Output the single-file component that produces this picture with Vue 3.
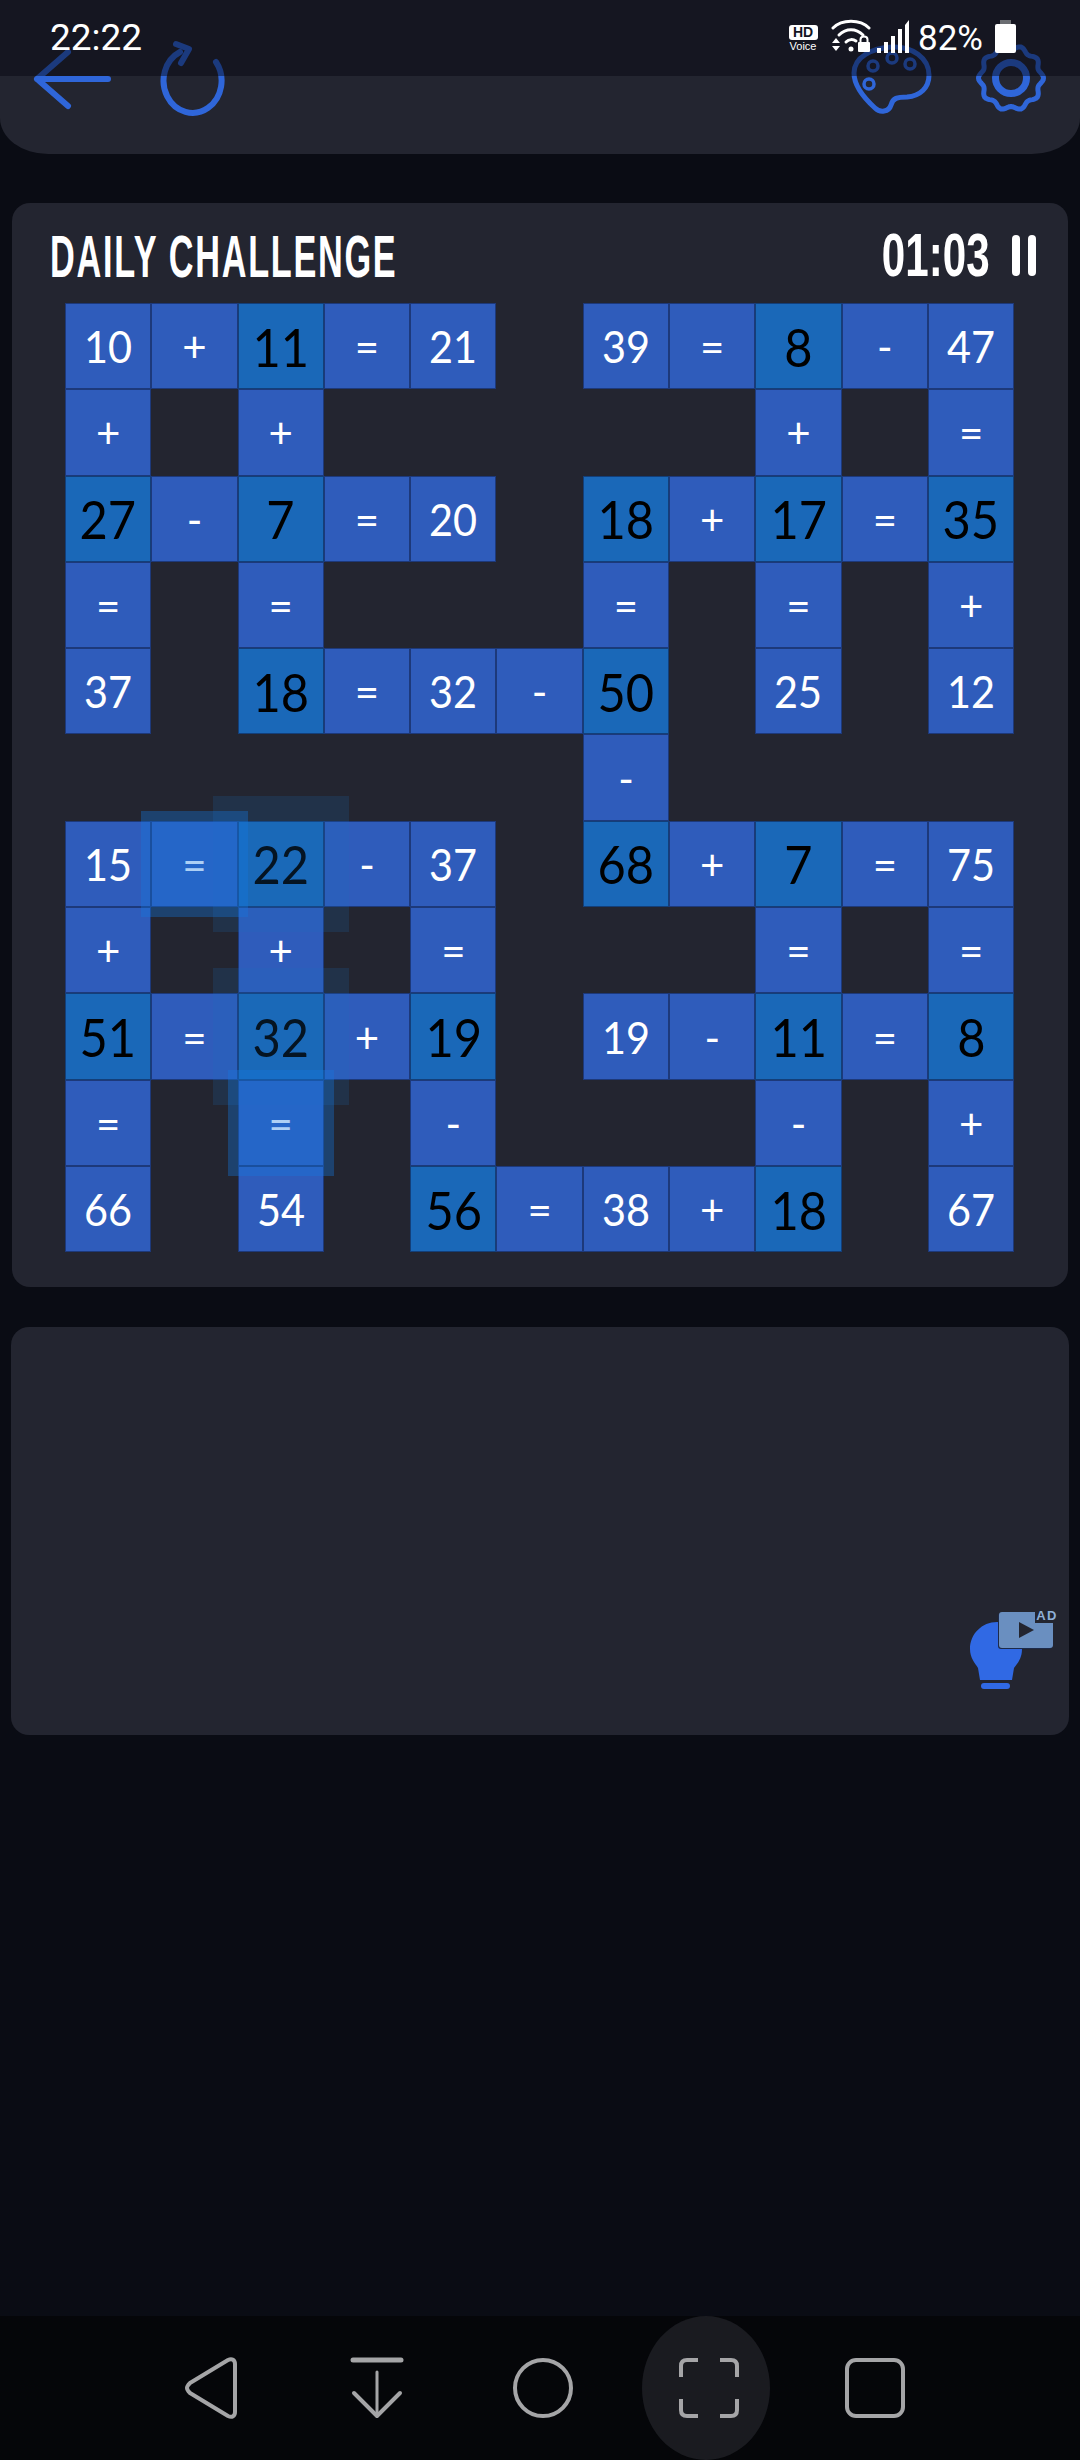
<script setup>
const rows = [
  '10 + 11* = 21 _ 39 = 8* - 47',
  '+ _ + _ _ _ _ _ + _ =',
  '27* - 7* = 20 _ 18* + 17* = 35*',
  '= _ = _ _ _ = _ = _ +',
  '37 _ 18* = 32 - 50* _ 25 _ 12',
  '_ _ _ _ _ _ - _ _ _ _',
  '15 =! 22*~ - 37 _ 68* + 7* = 75',
  '+ _ + _ = _ _ _ = _ =',
  '51* = 32*~ + 19* _ 19 - 11* = 8*',
  '= _ =! _ - _ _ _ - _ +',
  '66 _ 54 _ 56* = 38 + 18* _ 67',
]

// every token: text plus optional markers (* solved, ! selected, ~ halo)
const cells = rows.flatMap((row) => row.split(' ')).map((tok) => ({
  text: tok === '_' ? '' : tok.replace(/[*!~]/g, ''),
  empty: tok === '_',
  number: /\d/.test(tok),
  solved: tok.includes('*'),
  selected: tok.includes('!'),
  halo: tok.includes('~'),
}))

// wavy outline of the settings gear
const gearPoints = []
for (let i = 0; i < 120; i++) {
  const a = (i / 120) * Math.PI * 2
  const r = 30.5 + 2 * Math.cos(a * 10)
  gearPoints.push((37 + r * Math.cos(a)).toFixed(1) + ',' + (38 + r * Math.sin(a)).toFixed(1))
}
const gearOutline = gearPoints.join(' ')
</script>

<template>
  <div class="page">
    <header class="topbar">
      <div class="status">
        <span class="clock">22:22</span>
        <div class="status-right">
          <div class="hd">
            <span class="hd-box">HD</span>
            <span class="hd-voice">Voice</span>
          </div>
          <svg class="wifi" width="42" height="34" viewBox="0 0 42 34">
            <path d="M2 9C11 0 29 0 38 9" fill="none" stroke="#fff" stroke-width="3" stroke-linecap="round" />
            <path d="M8 16C15 9 25 9 32 16" fill="none" stroke="#fff" stroke-width="3" stroke-linecap="round" />
            <path d="M15 23C18 20 22 20 25 22" fill="none" stroke="#fff" stroke-width="3" stroke-linecap="round" />
            <circle cx="20" cy="30" r="2.5" fill="#fff" />
            <path d="M1 24L5 19L9 24ZM1 27L9 27L5 32Z" fill="#fff" />
            <rect x="27" y="23" width="12" height="10" rx="1" fill="#fff" />
            <path d="M29.5 23V20.5C29.5 16.5 36.5 16.5 36.5 20.5V23" fill="none" stroke="#fff" stroke-width="2" />
          </svg>
          <svg class="signal" width="34" height="33" viewBox="0 0 34 33">
            <rect x="0" y="28" width="4" height="5" fill="#fff" />
            <rect x="7" y="22" width="4" height="11" fill="#fff" />
            <rect x="14" y="16" width="4" height="17" fill="#fff" />
            <rect x="21" y="9" width="4" height="24" fill="#fff" />
            <path d="M28 5L32 0V33H28Z" fill="#fff" />
          </svg>
          <span class="percent">82%</span>
          <div class="battery"><i></i><b></b></div>
        </div>
      </div>

      <div class="tools">
        <div class="tool-group">
          <svg width="84" height="76" viewBox="0 0 84 76" fill="none" stroke="#2f66d9" stroke-width="6" stroke-linecap="round" stroke-linejoin="round">
            <path d="M7 39H78M7 39L38 12M7 39L38 66" />
          </svg>
          <svg class="refresh" width="72" height="76" viewBox="0 0 72 76" fill="none" stroke="#2f66d9" stroke-width="6" stroke-linecap="round" stroke-linejoin="round">
            <path d="M61 22A29 32 0 1 1 25 12" />
            <path d="M21 4L34 9L26 23" />
          </svg>
        </div>
        <div class="tool-group right">
          <svg width="84" height="76" viewBox="0 0 84 76" fill="none" stroke="#2f66d9" stroke-width="5" stroke-linejoin="round">
            <path d="M42 7C62 6 79 18 79 35C79 48 70 56 57 57C47 57 43 58 41 65C39 72 30 73 25 68C14 58 4 45 4 33C4 17 22 8 42 7Z" />
            <circle cx="23" cy="26" r="5" stroke-width="3.5" />
            <circle cx="42" cy="18" r="5" stroke-width="3.5" />
            <circle cx="60" cy="24" r="5" stroke-width="3.5" />
            <circle cx="19" cy="44" r="5" stroke-width="3.5" />
          </svg>
          <svg width="76" height="76" viewBox="0 0 76 76" fill="none" stroke="#2f66d9" stroke-width="5">
            <polygon :points="gearOutline" stroke-linejoin="round" />
            <circle cx="37" cy="38" r="15.5" stroke-width="7" />
          </svg>
        </div>
      </div>
    </header>

    <section class="card board-card">
      <div class="board-head">
        <h1 class="title"><span>DAILY CHALLENGE</span></h1>
        <div class="timer">
          <span class="time">01:03</span>
          <div class="pause"><i></i><i></i></div>
        </div>
      </div>
      <div class="board">
        <div
          v-for="(cell, i) in cells"
          :key="i"
          class="cell"
          :class="{ empty: cell.empty, solved: cell.solved }"
        >
          <span :class="{ num: cell.number }">{{ cell.text }}</span>
          <div v-if="cell.halo" class="halo"></div>
          <div v-if="cell.selected" class="glow"></div>
        </div>
      </div>
    </section>

    <section class="card hint-card">
      <div class="hint">
        <svg class="bulb" width="54" height="68" viewBox="0 0 54 68">
          <path d="M27 0C12 0 0 12 0 27C0 36 5 41 8 46L10 58H42L44 46C48 41 52 36 52 27C52 12 41 0 27 0Z" fill="#3069e4" />
          <rect x="11" y="61" width="29" height="6" rx="3" fill="#3069e4" />
        </svg>
        <div class="ad-tile">
          <svg width="18" height="18" viewBox="0 0 18 18"><path d="M2 1L17 9L2 17Z" fill="#232530" /></svg>
          <span class="ad-label">AD</span>
        </div>
      </div>
    </section>

    <div class="spacer"></div>

    <nav class="navbar">
      <div class="nav-btn">
        <svg width="54" height="62" viewBox="0 0 54 62" fill="none" stroke="#a5a5a7" stroke-width="4" stroke-linejoin="round">
          <path d="M3 31C3 29 4 28 6 26L44 3C48 1 51 3 51 7V55C51 59 48 61 44 59L6 36C4 34 3 33 3 31Z" />
        </svg>
      </div>
      <div class="nav-btn">
        <svg width="54" height="62" viewBox="0 0 54 62" fill="none" stroke="#a5a5a7" stroke-linecap="round" stroke-linejoin="round">
          <path d="M3 3H51" stroke-width="5" />
          <path d="M27 15V59" stroke-width="3" />
          <path d="M4 36L27 59L50 36" stroke-width="4" />
        </svg>
      </div>
      <div class="nav-btn">
        <svg width="62" height="62" viewBox="0 0 62 62" fill="none" stroke="#a5a5a7" stroke-width="4">
          <circle cx="31" cy="31" r="28" />
        </svg>
      </div>
      <div class="nav-btn active">
        <svg width="62" height="62" viewBox="0 0 62 62" fill="none" stroke="#a5a5a7" stroke-width="4">
          <path d="M20 3H9C5 3 3 5 3 9V20" />
          <path d="M42 3H53C57 3 59 5 59 9V20" />
          <path d="M20 59H9C5 59 3 57 3 53V42" />
          <path d="M42 59H53C57 59 59 57 59 53V42" />
        </svg>
      </div>
      <div class="nav-btn">
        <svg width="62" height="62" viewBox="0 0 62 62" fill="none" stroke="#a5a5a7" stroke-width="4">
          <rect x="3" y="3" width="56" height="56" rx="9" />
        </svg>
      </div>
    </nav>
  </div>
</template>

<style>
body {
  background: #0a0c14;
}
</style>

<style scoped>
.page {
  width: 1080px;
  height: 2460px;
  display: flex;
  flex-direction: column;
  background: #0a0c14;
  font-family: "Roboto", "Liberation Sans", sans-serif;
  overflow: hidden;
}

.topbar {
  position: relative;
  height: 154px;
  box-sizing: border-box;
  padding: 40px 30px 0;
  background: #232530;
  border-radius: 0 0 48px 48px / 0 0 36px 36px;
}

.status {
  position: absolute;
  top: 0;
  left: 0;
  right: 0;
  height: 76px;
  box-sizing: border-box;
  padding: 0 64px 0 50px;
  display: flex;
  justify-content: space-between;
  align-items: flex-start;
  background: rgba(5, 5, 15, 0.45);
  color: #fff;
}

.clock {
  font-size: 37px;
  line-height: 38px;
  margin-top: 19px;
}

.status-right {
  display: flex;
  align-items: flex-start;
  margin-top: 20px;
}

.hd {
  width: 30px;
  margin-top: 5px;
  display: flex;
  flex-direction: column;
  align-items: center;
}

.hd-box {
  width: 29px;
  height: 15px;
  border-radius: 3px;
  background: #fff;
  color: #14151f;
  font: 900 14px/15px "Liberation Sans", sans-serif;
  text-align: center;
}

.hd-voice {
  font: 11px/11px "Liberation Sans", sans-serif;
  margin-top: 1px;
}

.wifi {
  margin: -1px 0 0 13px;
}

.signal {
  margin-left: 4px;
}

.percent {
  margin-left: 7px;
  font-size: 35px;
  line-height: 38px;
}

.battery {
  margin-left: 12px;
  width: 21px;
  height: 33px;
}

.battery i {
  display: block;
  width: 11px;
  height: 4px;
  margin: 0 auto;
  background: #6b6d72;
}

.battery b {
  display: block;
  height: 29px;
  border-radius: 2px;
  background: #fff;
}

.tools {
  display: flex;
  justify-content: space-between;
}

.tool-group {
  display: flex;
  gap: 41px;
}

.tool-group.right {
  gap: 40px;
}

.card {
  background: #232530;
  border-radius: 18px;
}

.board-card {
  height: 1084px;
  box-sizing: border-box;
  margin: 49px 12px 0;
  padding: 24px 30px 0 53px;
}

.board-head {
  height: 76px;
  display: flex;
  justify-content: space-between;
  color: #fff;
}

.title {
  margin: 0 0 0 -15px;
  font: 700 60px/60px "Liberation Sans", sans-serif;
  letter-spacing: 3px;
  white-space: nowrap;
}

.title span {
  display: inline-block;
  transform: scaleX(0.571);
  transform-origin: left center;
}

.timer {
  display: flex;
  margin-right: 2px;
}

.time {
  font: 700 62px/60px "Liberation Sans", sans-serif;
  margin-top: -2px;
  transform: scaleX(0.68);
  transform-origin: right center;
}

.pause {
  display: flex;
  gap: 8px;
  margin: 8px 0 0 22px;
}

.pause i {
  width: 8px;
  height: 41px;
  border-radius: 4px;
  background: #fff;
}

.board {
  display: grid;
  grid-template-columns: repeat(11, 86.3px);
  grid-auto-rows: 86.3px;
  font-family: "Lato", "Open Sans", sans-serif;
}

.cell {
  position: relative;
  display: flex;
  align-items: center;
  justify-content: center;
  background: #2f5cbb;
  box-shadow: inset 0 0 0 1px rgba(15, 30, 70, 0.55);
  color: #fff;
  font-size: 42px;
}

.cell.empty {
  background: none;
  box-shadow: none;
}

.cell.solved {
  background: #1a68b8;
  color: #000;
}

.num {
  display: inline-block;
  font-size: 45px;
  transform: scaleX(0.92);
}

.solved .num {
  font-size: 53px;
}

.halo {
  position: absolute;
  inset: -25px;
  z-index: 1;
  background: rgba(30, 110, 190, 0.18);
}

.glow {
  position: absolute;
  inset: -10px;
  z-index: 2;
  background: rgba(20, 120, 225, 0.35);
}

.hint-card {
  height: 408px;
  margin: 40px 11px 0;
  position: relative;
}

.hint {
  position: absolute;
  right: 13px;
  top: 285px;
  width: 86px;
  height: 80px;
}

.bulb {
  position: absolute;
  left: 0;
  top: 10px;
}

.ad-tile {
  position: absolute;
  right: 3px;
  top: 0;
  width: 54px;
  height: 36px;
  border-radius: 3px;
  background: #6a8fc0;
  box-shadow: -1px 1px 0 #1d2a4a;
  display: flex;
  align-items: center;
  justify-content: center;
}

.ad-label {
  position: absolute;
  right: -6px;
  top: -4px;
  padding: 0 1px;
  background: #232530;
  color: #8fb0d8;
  font: 700 13px/15px "Liberation Sans", sans-serif;
  letter-spacing: 1.5px;
}

.spacer {
  flex: 1;
}

.navbar {
  height: 144px;
  box-sizing: border-box;
  padding-left: 6px;
  display: flex;
  justify-content: center;
  background: #050609;
}

.nav-btn {
  position: relative;
  width: 166px;
  display: flex;
  justify-content: center;
  padding-top: 41px;
  box-sizing: border-box;
}

.nav-btn svg {
  position: relative;
}

.nav-btn.active::before {
  content: "";
  position: absolute;
  left: 16px;
  top: 0;
  width: 128px;
  height: 144px;
  border-radius: 50%;
  background: #1a1b20;
}
</style>
